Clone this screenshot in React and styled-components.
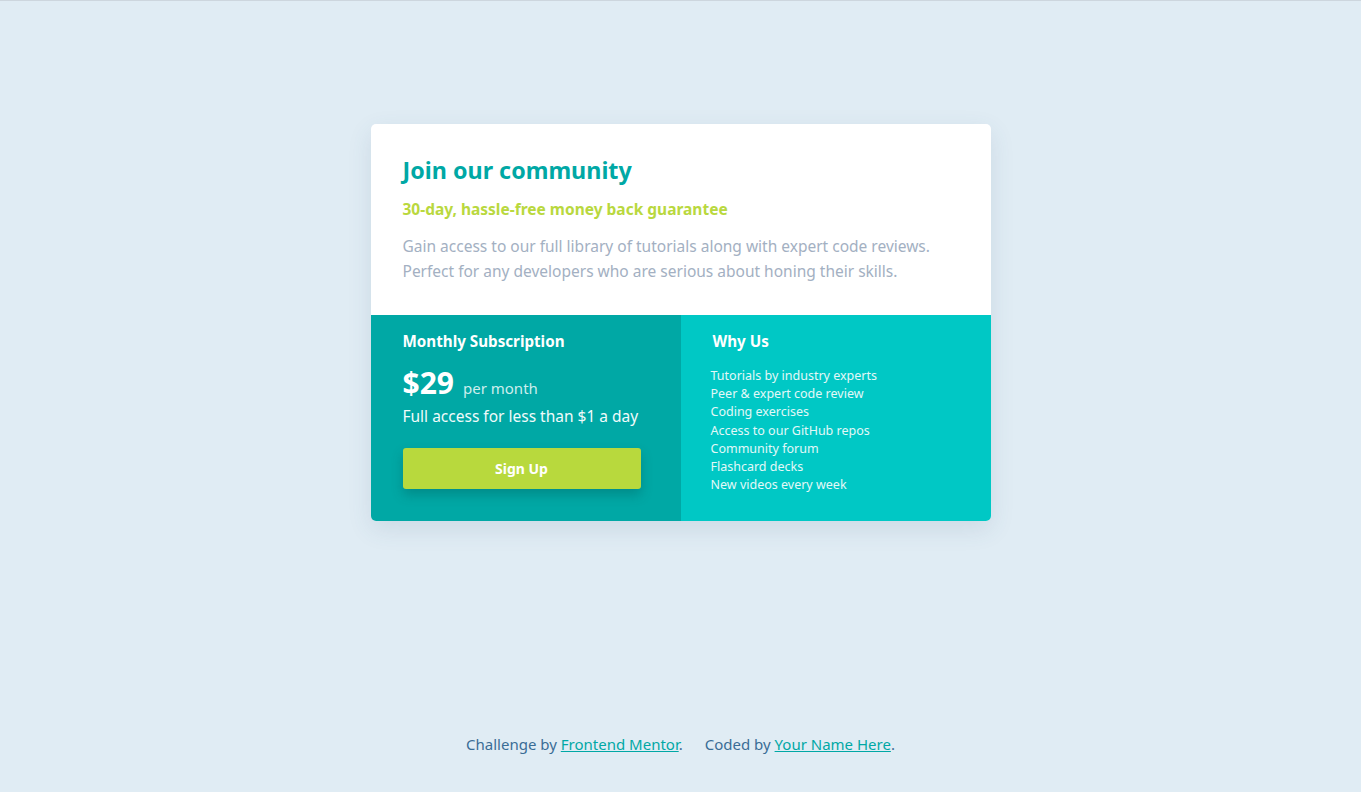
import React from "react";
import styled, { createGlobalStyle } from "styled-components";

const Global = createGlobalStyle`
  html, body { margin: 0; padding: 0; }
  body {
    background: #e0ecf4;
    font-family: "Noto Sans", "Liberation Sans", sans-serif;
  }
  * { box-sizing: border-box; }
`;

const Page = styled.div`
  min-height: 100vh;
  border-top: 1px solid #cdd6de;
  display: flex;
  flex-direction: column;
  align-items: center;
`;

const Card = styled.main`
  margin-top: 123px;
  width: 620px;
  background: #fff;
  border-radius: 5px;
  overflow: hidden;
  box-shadow: 0 8px 24px rgba(60, 90, 120, 0.12);
`;

const Top = styled.section`
  padding: 29px 32px 31px;
`;

const Title = styled.h1`
  margin: 0;
  font-size: 23.3px;
  line-height: 34px;
  font-weight: 700;
  color: #00a8a5;
`;

const Guarantee = styled.p`
  margin: 10px 0 0;
  font-size: 15.5px;
  line-height: 24px;
  font-weight: 700;
  color: #b9d83e;
`;

const Desc = styled.p`
  margin: 13px 0 0;
  font-size: 15.5px;
  line-height: 25px;
  color: #a3b0c2;
`;

const Bottom = styled.div`
  display: grid;
  grid-template-columns: 1fr 1fr;
`;

const Half = styled.section`
  background: ${(p) => p.$bg};
  padding: 14px 32px ${(p) => p.$bottom}px;
  color: #fff;
`;

const SubTitle = styled.h2`
  margin: 0;
  font-size: 15.2px;
  line-height: 24px;
  font-weight: 700;
  color: #fff;
`;

const PriceRow = styled.div`
  display: flex;
  align-items: baseline;
  margin-top: 11px;
`;

const Price = styled.span`
  font-size: 30px;
  line-height: 38px;
  font-weight: 700;
`;

const Per = styled.span`
  margin-left: 9px;
  font-size: 15px;
  color: #cdeeed;
`;

const Access = styled.p`
  margin: 2px 0 0;
  font-size: 15.5px;
  line-height: 24px;
  color: #f0fbfb;
`;

const Button = styled.button`
  margin-top: 20px;
  width: 238px;
  height: 41px;
  border: none;
  border-radius: 3px;
  background: #b8d93d;
  color: #fff;
  font-family: inherit;
  font-size: 14px;
  font-weight: 700;
  box-shadow: 0 6px 12px rgba(0, 70, 70, 0.28);
  cursor: pointer;
`;

const List = styled.ul`
  list-style: none;
  margin: 14px 0 0 -2px;
  padding: 0;
`;

const Item = styled.li`
  font-size: 12.5px;
  line-height: 18.2px;
  color: #e3f8f8;
`;

const Footer = styled.footer`
  margin-top: auto;
  padding-bottom: 38px;
  font-size: 15px;
  line-height: 20px;
  color: #3a6d96;
  display: flex;
  gap: 22px;
`;

const Link = styled.a`
  color: #00a8a5;
  text-decoration: underline;
`;

const features = [
  "Tutorials by industry experts",
  "Peer & expert code review",
  "Coding exercises",
  "Access to our GitHub repos",
  "Community forum",
  "Flashcard decks",
  "New videos every week",
];

export default function App() {
  return (
    <>
      <Global />
      <Page>
        <Card>
          <Top>
            <Title>Join our community</Title>
            <Guarantee>30-day, hassle-free money back guarantee</Guarantee>
            <Desc>
              Gain access to our full library of tutorials along with expert code reviews.
              <br />
              Perfect for any developers who are serious about honing their skills.
            </Desc>
          </Top>
          <Bottom>
            <Half $bg="#00a8a5" $bottom={32}>
              <SubTitle>Monthly Subscription</SubTitle>
              <PriceRow>
                <Price>$29</Price>
                <Per>per month</Per>
              </PriceRow>
              <Access>Full access for less than $1 a day</Access>
              <Button>Sign Up</Button>
            </Half>
            <Half $bg="#00c8c5" $bottom={24}>
              <SubTitle>Why Us</SubTitle>
              <List>
                {features.map((f) => (
                  <Item key={f}>{f}</Item>
                ))}
              </List>
            </Half>
          </Bottom>
        </Card>
        <Footer>
          <span>
            Challenge by <Link href="#">Frontend Mentor</Link>.
          </span>
          <span>
            Coded by <Link href="#">Your Name Here</Link>.
          </span>
        </Footer>
      </Page>
    </>
  );
}
